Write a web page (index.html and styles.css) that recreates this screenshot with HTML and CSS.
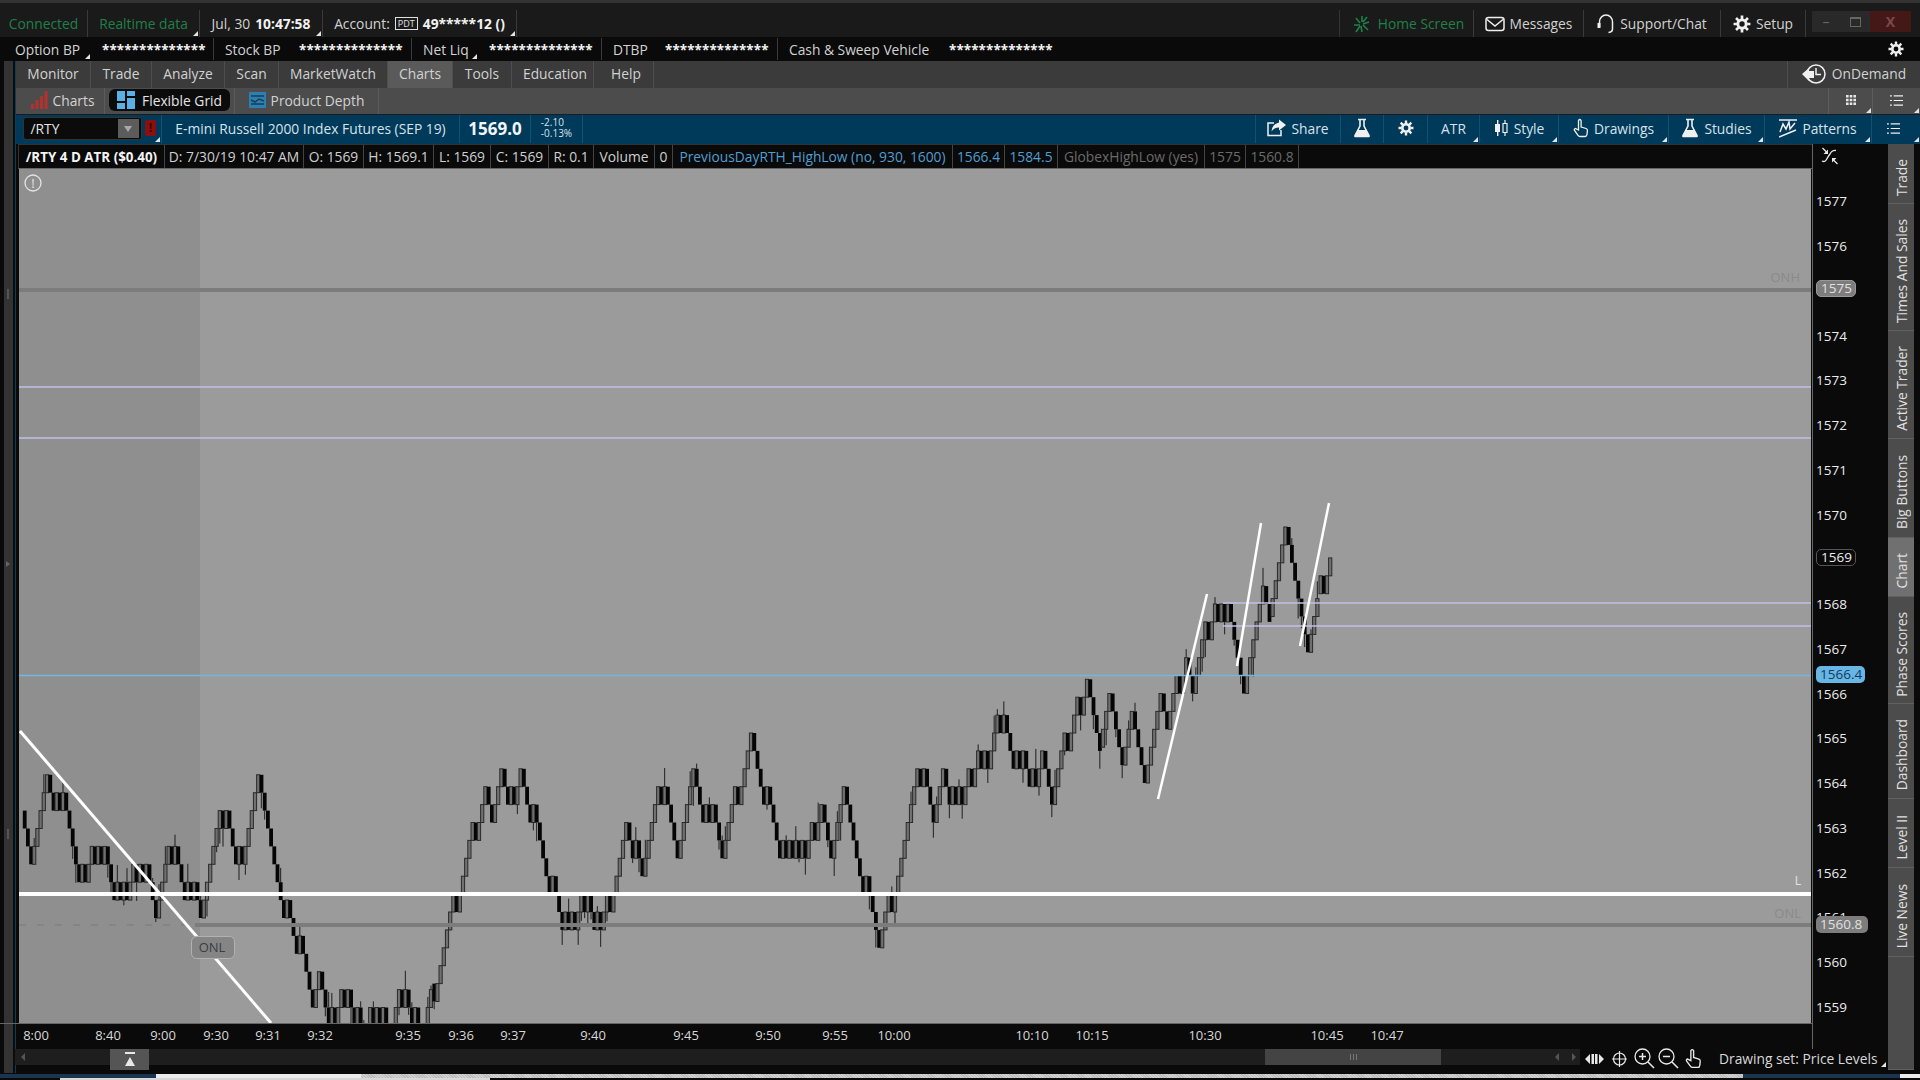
FILE: index.html
```html
<!DOCTYPE html>
<html>
  <head>
    <meta charset="UTF-8" />
    <title>Charts</title>
    <link rel="stylesheet" href="styles.css">
  </head>
  <body>
    <!-- shared icons -->
    <svg class="defs" width="0" height="0">
      <symbol id="gear" viewBox="0 0 16 16">
        <g fill="none" stroke="currentColor">
          <circle cx="8" cy="8" r="3.7" stroke-width="2.6" />
          <path stroke-width="2.4" d="M8 .5v3M8 12.5v3M.5 8h3M12.5 8h3M2.7 2.7l2.1 2.1M11.2 11.2l2.1 2.1M2.7 13.3l2.1-2.1M11.2 4.8l2.1-2.1" />
        </g>
      </symbol>
      <symbol id="flask" viewBox="0 0 18 20">
        <path fill="none" stroke="currentColor" stroke-width="1.6" d="M5 1.5h8M7 2v6L2 17.5q-.4 1 .7 1h12.6q1.100 0 .7-1L11 8V2" />
        <path fill="currentColor" d="M5 12h8l3.500 6.500h-15z" />
      </symbol>
      <symbol id="list" viewBox="0 0 14 14">
        <path fill="none" stroke="currentColor" stroke-width="1.300" d="M0 2h2M4 2h10M0 7h2M4 7h10M0 12h2M4 12h10" />
      </symbol>
      <symbol id="hand" viewBox="0 0 16 20">
        <path fill="none" stroke="currentColor" stroke-width="1.300" d="M5.500 12V2.500q1.300-2 2.600 0V9l5 1.500q1.400.5 1.300 2l-.4 4q-.3 2-2 2H7q-1.200 0-2-1.200L1.500 12.500q-.8-1.500.8-2z" />
      </symbol>
    </svg>

    <div class="app">
      <div class="topline"></div>

      <div class="statusbar">
        <div class="cell green">Connected</div>
        <div class="cell green tri">Realtime data</div>
        <div class="cell tri">Jul, 30 <b>10:47:58</b></div>
        <div class="cell tri">Account: <span class="pdt">PDT</span> <b>49*****12 ()</b></div>
        <div class="cell blank"></div>
        <div class="cell green home">
          <svg class="ico" width="17" height="18" viewBox="0 0 17 18">
            <path fill="none" stroke="currentColor" stroke-width="1.600" d="M9 1v6M3 3l4 5M1 10h6M3 17l4-6M9 17l-1-6M15 15l-5-5M16 7l-6 2M14 2l-4 5" />
          </svg>
          Home Screen
        </div>
        <div class="cell">
          <svg class="ico" width="20" height="16" viewBox="0 0 20 16">
            <rect x="1" y="1.500" width="18" height="13" rx="2.500" fill="none" stroke="currentColor" stroke-width="1.500" />
            <path d="M2 3.500l8 6.500 8-6.500" fill="none" stroke="currentColor" stroke-width="1.500" />
          </svg>
          Messages
        </div>
        <div class="cell">
          <svg class="ico" width="18" height="20" viewBox="0 0 18 20">
            <path fill="none" stroke="currentColor" stroke-width="1.500" d="M2.500 13V8a6.500 7 0 0 1 13 0v7q0 3-4 3.500" />
            <path fill="currentColor" d="M.5 9h3v5h-3z" />
          </svg>
          Support/Chat
        </div>
        <div class="cell">
          <svg class="ico" width="18" height="18"><use href="#gear" /></svg>
          Setup
        </div>
        <div class="winbtns">
          <span class="winbtn">&ndash;</span>
          <span class="winbtn"><i class="maxbox"></i></span>
          <span class="winbtn close">X</span>
        </div>
      </div>

      <div class="balances">
        <div class="cell label tri">Option BP</div>
        <div class="cell stars">**************</div>
        <div class="cell label">Stock BP</div>
        <div class="cell stars">**************</div>
        <div class="cell label tri">Net Liq</div>
        <div class="cell stars">**************</div>
        <div class="cell label">DTBP</div>
        <div class="cell stars">**************</div>
        <div class="cell label">Cash &amp; Sweep Vehicle</div>
        <div class="cell stars noline">**************</div>
        <div class="cell blank noline"></div>
        <div class="cell noline gearcell">
          <svg class="ico" width="16" height="16"><use href="#gear" /></svg>
        </div>
      </div>

      <div class="workspace">
        <div class="gutter">
          <i class="grip"></i>
          <i class="notch"></i>
          <i class="grip"></i>
        </div>

        <div class="main">
          <nav class="menu">
            <a class="cell">Monitor</a>
            <a class="cell">Trade</a>
            <a class="cell">Analyze</a>
            <a class="cell">Scan</a>
            <a class="cell">MarketWatch</a>
            <a class="cell active">Charts</a>
            <a class="cell">Tools</a>
            <a class="cell nudge">Education</a>
            <a class="cell nudge">Help</a>
            <div class="cell blank"></div>
            <a class="cell noline">
              <svg class="ico" width="25" height="22" viewBox="0 0 25 22">
                <circle cx="14" cy="11" r="9" fill="none" stroke="currentColor" stroke-width="1.500" />
                <path d="M14 5v6.500h5" fill="none" stroke="currentColor" stroke-width="1.500" />
                <path fill="currentColor" d="M0 11l7-6v3h5v7H7v3z" />
              </svg>
              OnDemand
            </a>
          </nav>

          <div class="subtabs">
            <div class="cell nudge">
              <svg class="ico" width="17" height="18" viewBox="0 0 17 18">
                <path fill="#b5322c" d="M0 13h3v5H0zM4.500 9h3v9h-3zM9 5h3v13H9zM13.500 0h3v18h-3z" />
              </svg>
              Charts
            </div>
            <div class="cell">
              <span class="pill">
                <svg class="ico" width="18" height="18" viewBox="0 0 18 18">
                  <path fill="#58b0e4" d="M0 0h8v10H0zM10 0h8v5h-8zM0 12h8v6H0zM10 7h8v11h-8z" />
                </svg>
                Flexible Grid
              </span>
            </div>
            <div class="cell">
              <svg class="ico" width="17" height="16" viewBox="0 0 17 16">
                <rect width="17" height="16" fill="#2e7fb0" />
                <path d="M2 4h13M2 8l4 2 4-3 5 2M2 12h13" fill="none" stroke="#12405c" stroke-width="1.500" />
              </svg>
              Product Depth
            </div>
            <div class="cell blank"></div>
            <div class="cell tri">
              <svg width="10" height="10" viewBox="0 0 10 10">
                <path fill="#e8e8e8" d="M0 0h2.600v2.600H0zM3.700 0h2.600v2.600H3.700zM7.400 0H10v2.600H7.400zM0 3.700h2.600v2.600H0zM3.700 3.700h2.600v2.600H3.700zM7.400 3.700H10v2.600H7.400zM0 7.400h2.600V10H0zM3.700 7.400h2.600V10H3.700zM7.400 7.400H10V10H7.400z" />
              </svg>
            </div>
            <div class="cell tri noline">
              <svg class="ico" width="13" height="13"><use href="#list" /></svg>
            </div>
          </div>

          <div class="symbolbar">
            <div class="cell noline">
              <div class="symbol">
                <span>/RTY</span>
                <i class="drop"></i>
              </div>
            </div>
            <div class="cell tri flagcell"><span class="alertflag">!</span></div>
            <div class="cell title">E-mini Russell 2000 Index Futures (SEP 19)</div>
            <div class="cell price">1569.0</div>
            <div class="cell change"><span>-2.10<br />-0.13%</span></div>
            <div class="cell blank"></div>
            <div class="cell">
              <svg class="ico" width="19" height="18" viewBox="0 0 19 18">
                <path fill="none" stroke="currentColor" stroke-width="1.500" d="M14 11v5.500H1V4h6" />
                <path fill="currentColor" d="M12 .5l7 5.500-7 5.500V8.500q-5 0-7.500 4Q5 5 12 3.500z" />
              </svg>
              Share
            </div>
            <div class="cell">
              <svg class="ico" width="18" height="20"><use href="#flask" /></svg>
            </div>
            <div class="cell">
              <svg class="ico" width="16" height="16"><use href="#gear" /></svg>
            </div>
            <div class="cell tri">ATR</div>
            <div class="cell tri">
              <svg class="ico" width="15" height="18" viewBox="0 0 15 18">
                <path fill="currentColor" d="M3 1h1.400v4H6v8H4.400v4H3v-4H1V5h2z" />
                <path fill="none" stroke="currentColor" stroke-width="1.200" d="M11 1v3.500M11 13.500V17M9 4.500h4v9H9z" />
              </svg>
              Style
            </div>
            <div class="cell tri">
              <svg class="ico" width="16" height="20"><use href="#hand" /></svg>
              Drawings
            </div>
            <div class="cell tri">
              <svg class="ico" width="18" height="20"><use href="#flask" /></svg>
              Studies
            </div>
            <div class="cell tri">
              <svg class="ico" width="18" height="19" viewBox="0 0 18 19">
                <path fill="none" stroke="currentColor" stroke-width="1.500" d="M0 1h18M1 13l3-8 3 5 3-7 1 7 5-6M0 18l17-7" />
              </svg>
              Patterns
            </div>
            <div class="cell tri noline listcell">
              <svg class="ico" width="13" height="13"><use href="#list" /></svg>
            </div>
          </div>

          <div class="body">
            <div class="infobar">
              <div class="info strong">/RTY 4 D ATR ($0.40)</div>
              <div class="info">D: 7/30/19 10:47 AM</div>
              <div class="info">O: 1569</div>
              <div class="info">H: 1569.1</div>
              <div class="info">L: 1569</div>
              <div class="info">C: 1569</div>
              <div class="info">R: 0.1</div>
              <div class="info">Volume</div>
              <div class="info">0</div>
              <div class="info blue">PreviousDayRTH_HighLow (no, 930, 1600)</div>
              <div class="info blue">1566.4</div>
              <div class="info blue">1584.5</div>
              <div class="info grey">GlobexHighLow (yes)</div>
              <div class="info grey">1575</div>
              <div class="info grey">1560.8</div>
            </div>

            <div class="chart">
              <svg class="plot" width="1792" height="854" viewBox="19 169 1792 854">
                <rect class="plot-bg" x="19" y="169" width="1792" height="854" />
                <rect class="plot-shade" x="19" y="169" width="181" height="854" />
                <g id="candles"></g>

                <line class="lvl-grey" x1="19" y1="290" x2="1811" y2="290" />
                <line class="lvl-grey" x1="195" y1="925" x2="1811" y2="925" />
                <line class="lvl-dash" x1="19" y1="925" x2="195" y2="925" />
                <line class="lvl-lav" x1="19" y1="387" x2="1811" y2="387" />
                <line class="lvl-lav" x1="19" y1="438" x2="1811" y2="438" />
                <line class="lvl-lav" x1="1223" y1="603" x2="1811" y2="603" />
                <line class="lvl-lav" x1="1223" y1="626" x2="1811" y2="626" />
                <line class="lvl-blue" x1="19" y1="675.500" x2="1811" y2="675.500" />
                <line class="lvl-white" x1="19" y1="894" x2="1811" y2="894" />

                <line class="trend" x1="20" y1="731" x2="271" y2="1023" />
                <line class="trend thin" x1="1158" y1="799" x2="1207" y2="594" />
                <line class="trend thin" x1="1237" y1="666" x2="1261" y2="523" />
                <line class="trend thin" x1="1300" y1="646" x2="1329" y2="503" />

                <text class="lvl-text" x="1800" y="282" text-anchor="end">ONH</text>
                <text class="lvl-text" x="1801" y="918" text-anchor="end">ONL</text>
                <text class="lvl-mark" x="1801" y="885" text-anchor="end">L</text>

                <rect class="bubble" x="191.500" y="936.500" width="43" height="22" rx="5" />
                <text class="bubble-text" x="212" y="952" text-anchor="middle">ONL</text>

                <circle class="note" cx="33" cy="183" r="8" />
                <text class="note-text" x="33" y="188" text-anchor="middle">!</text>
              </svg>
            </div>

            <div class="timeline">
              <span style="left: 36px">8:00</span>
              <span style="left: 108px">8:40</span>
              <span style="left: 163px">9:00</span>
              <span style="left: 216px">9:30</span>
              <span style="left: 268px">9:31</span>
              <span style="left: 320px">9:32</span>
              <span style="left: 408px">9:35</span>
              <span style="left: 461px">9:36</span>
              <span style="left: 513px">9:37</span>
              <span style="left: 593px">9:40</span>
              <span style="left: 686px">9:45</span>
              <span style="left: 768px">9:50</span>
              <span style="left: 835px">9:55</span>
              <span style="left: 894px">10:00</span>
              <span style="left: 1032px">10:10</span>
              <span style="left: 1092px">10:15</span>
              <span style="left: 1205px">10:30</span>
              <span style="left: 1327px">10:45</span>
              <span style="left: 1387px">10:47</span>
            </div>

            <div class="axis">
              <svg class="axis-ico" width="18" height="18" viewBox="0 0 18 18">
                <path fill="none" stroke="#e8e8e8" stroke-width="1.300" d="M1 14q3 1.500 4.500-1.500T9 7q2-4 6-3.500" />
                <path fill="none" stroke="#e8e8e8" stroke-width="1.300" d="M1.500 1l4 4M16.500 17l-4-4" />
                <path fill="#e8e8e8" d="M7 7H2.500L7 2.500zM11 11h4.500L11 15.500z" />
              </svg>
              <div class="prices">
                <span>1577</span><span>1576</span><span class="under">1575</span><span>1574</span>
                <span>1573</span><span>1572</span><span>1571</span><span>1570</span>
                <span class="under">1569</span><span>1568</span><span>1567</span><span>1566</span>
                <span>1565</span><span>1564</span><span>1563</span><span>1562</span>
                <span>1561</span><span>1560</span><span>1559</span>
              </div>
              <span class="badge b-grey b-1575">1575</span>
              <span class="badge b-last">1569</span>
              <span class="badge b-blue">1566.4</span>
              <span class="badge b-grey b-1560">1560.8</span>
            </div>

            <div class="sidetabs">
              <div class="tab"><span>Trade</span></div>
              <div class="tab"><span>Times And Sales</span></div>
              <div class="tab"><span>Active Trader</span></div>
              <div class="tab"><span>Big Buttons</span></div>
              <div class="tab active"><span>Chart</span></div>
              <div class="tab"><span>Phase Scores</span></div>
              <div class="tab"><span>Dashboard</span></div>
              <div class="tab"><span>Level II</span></div>
              <div class="tab"><span>Live News</span></div>
              <div class="tab"></div>
            </div>

            <div class="bottombar">
              <div class="scroller">
                <i class="arrow left first"></i>
                <div class="pin">
                  <svg width="12" height="15" viewBox="0 0 12 15">
                    <path fill="#e8e8e8" d="M1 0h10v2H1zM6 5l5 9H1z" />
                  </svg>
                </div>
                <div class="thumb"><i class="gripper"></i></div>
                <i class="arrow left"></i>
                <i class="arrow right"></i>
              </div>
              <div class="tools">
                <svg class="t-pan" width="19" height="14" viewBox="0 0 19 14">
                  <path fill="#e8e8e8" d="M0 7l5-5v10zM19 7l-5-5v10zM6.500 2h2.500v10H6.500zM10 2h2.500v10H10z" />
                </svg>
                <svg class="t-cross" width="15" height="16" viewBox="0 0 15 16">
                  <circle cx="7.500" cy="8" r="6" fill="none" stroke="#e8e8e8" stroke-width="1.200" />
                  <path d="M7.500 0v16M0 8h15" stroke="#e8e8e8" stroke-width="1.200" />
                </svg>
                <svg class="t-zoomin" width="21" height="21" viewBox="0 0 21 21">
                  <circle cx="8.500" cy="8.500" r="7.500" fill="none" stroke="#e8e8e8" stroke-width="1.300" />
                  <path d="M14 14l6 6M5 8.500h7M8.500 5v7" stroke="#e8e8e8" stroke-width="1.500" />
                </svg>
                <svg class="t-zoomout" width="21" height="21" viewBox="0 0 21 21">
                  <circle cx="8.500" cy="8.500" r="7.500" fill="none" stroke="#e8e8e8" stroke-width="1.300" />
                  <path d="M14 14l6 6M5 8.500h7" stroke="#e8e8e8" stroke-width="1.500" />
                </svg>
                <svg class="hand" width="17" height="21"><use href="#hand" /></svg>
                <span class="drawset tri">Drawing set: Price Levels</span>
              </div>
            </div>
          </div>
        </div>
      </div>

      <div class="taskbar">
        <div class="taskrow">
          <i class="seg-blue"></i>
          <i class="seg-white"></i>
          <i class="seg-hatch"></i>
          <i class="seg-blue"></i>
          <i class="seg-white"></i>
        </div>
        <i class="taskline"></i>
      </div>
    </div>

    <script src="chart.js"></script>
  </body>
</html>
```

FILE: styles.css
```css
* {
  box-sizing: border-box;
}

body {
  margin: 0;
  width: 1920px;
  height: 1080px;
  overflow: hidden;
  background-color: #0a0a0a;
  color: #d2d2d2;
  font-family: "Open Sans", "Liberation Sans", sans-serif;
  font-size: 13.8px;
}

.defs {
  position: absolute;
}

.app {
  display: flex;
  flex-direction: column;
  height: 1080px;
}

.topline {
  height: 3px;
  background-color: #333;
}

/* generic bar cell */
.cell {
  position: relative;
  display: flex;
  align-items: center;
  justify-content: center;
  gap: 5px;
  white-space: nowrap;
  min-width: 0;
  border-right: 1px solid #3a3a3a;
}

.noline {
  border-right: 0;
}

.nudge {
  padding-left: 5px;
}

.ico {
  flex: none;
  color: #f0f0f0;
}

/* little corner triangle on cells that have a menu */
.tri::after {
  content: "";
  position: absolute;
  right: 1px;
  bottom: 1px;
  border-style: solid;
  border-width: 0 0 5px 5px;
  border-color: transparent transparent #e4e4e4 transparent;
}

.statusbar {
  display: grid;
  grid-template-columns: 88px 112px 123px 194px 1fr 134px 110px 137px 85px 114px;
  height: 34px;
  background-color: #1a1a1a;
  flex: none;
}

.statusbar .cell {
  margin: 7px 0 0;
}

.statusbar .blank {
  border-right: 1px solid #333;
}

.statusbar .home {
  padding-left: 4px;
  gap: 8px;
}

.green,
.green .ico {
  color: #1f8048;
}

b {
  color: #f2f2f2;
}

.pdt {
  padding: 0 2px;
  border: 1px solid #e0e0e0;
  color: #e0e0e0;
  font-size: 9px;
  line-height: 11px;
}

.winbtns {
  display: grid;
  grid-template-columns: 28px 30px 41px;
  height: 21px;
  margin: 8px 0 0 6px;
  color: #666;
}

.winbtn {
  display: flex;
  align-items: center;
  justify-content: center;
  background-color: #292929;
  font-size: 14px;
}

.winbtn.close {
  background-color: #451818;
  color: #7a4a4a;
  font-weight: bold;
}

.maxbox {
  width: 11px;
  height: 10px;
  border: 1px solid #666;
  border-top-width: 2px;
}

.balances {
  display: grid;
  grid-template-columns: 102px 112px 85px 113px 77px 113px 63px 113px 171px 113px 1fr 48px;
  height: 24px;
  background-color: #0a0a0a;
  flex: none;
}

.balances .cell {
  justify-content: flex-start;
  margin: 1px 0;
}

.balances .label {
  border-right: 0;
  padding-left: 11px;
}

.balances .label:first-child {
  padding-left: 15px;
}

.balances .label:first-child::after {
  right: 12px;
}

.balances .label:nth-child(5)::after {
  right: 12px;
}

.balances .gearcell {
  justify-content: center;
}

.stars {
  color: #f2f2f2;
  font-weight: bold;
  font-size: 13.4px;
  letter-spacing: 0.1px;
  padding-top: 1px;
}

.workspace {
  display: flex;
  height: 1012px;
  flex: none;
}

.gutter {
  flex: none;
  display: flex;
  flex-direction: column;
  align-items: center;
  gap: 262px;
  width: 15px;
  padding: 228px 2px 0 4px;
  background: linear-gradient(to right, #333 9px, #0c0c0c 9px);
  background-position: 4px 0;
  background-repeat: no-repeat;
}

.grip {
  width: 2px;
  height: 10px;
  background-color: #555;
  margin-right: 2px;
}

.notch {
  width: 0;
  height: 0;
  margin-right: 2px;
  border-style: solid;
  border-width: 3px 0 3px 4px;
  border-color: transparent transparent transparent #666;
}

.main {
  flex: 1;
  display: flex;
  flex-direction: column;
  min-width: 0;
  border-left: 1px solid #0c3c58;
}

.menu {
  display: grid;
  grid-template-columns: 75px 61px 73px 54px 109px 65px 59px 82px 60px 1fr 132px;
  height: 27px;
  background-color: #3b3b3b;
  flex: none;
}

.menu .cell {
  border-right-color: #4e4e4e;
  padding-bottom: 2px;
}

.menu .active {
  background-color: #5a5a5a;
}

.subtabs {
  display: grid;
  grid-template-columns: 89px 130px 144px 1fr 44px 47px;
  height: 26px;
  background-color: #4c4c4c;
  flex: none;
}

.subtabs .cell {
  border-right-color: #5c5c5c;
  padding-bottom: 2px;
}

.pill {
  display: flex;
  align-items: center;
  gap: 7px;
  height: 22px;
  padding: 0 8px;
  border-radius: 6px;
  background-color: #0b0b0b;
  color: #e4e4e4;
}

.symbolbar {
  display: grid;
  grid-template-columns: 129px 17px 298px 71px 52px 1fr 85px 43px 44px 52px 79px 110px 96px 107px 48px;
  height: 30px;
  padding-bottom: 1px;
  background-color: #003a5b;
  border-top: 1px solid #1c1c1c;
  flex: none;
  color: #d8e2e8;
}

.symbolbar .cell {
  border-right-color: #14506f;
  padding-bottom: 2px;
}

.symbolbar .flagcell {
  padding-right: 5px;
}

.symbolbar .listcell {
  padding-right: 6px;
}

.symbol {
  display: flex;
  align-items: center;
  justify-content: space-between;
  width: 119px;
  height: 23px;
  margin-left: 3px;
  padding: 0 2px 0 7px;
  border: 1px solid #333;
  border-radius: 3px;
  background-color: #0b0b0b;
  color: #e4e4e4;
}

.drop {
  position: relative;
  width: 21px;
  height: 19px;
  background-color: #5c5c5c;
}

.drop::after {
  content: "";
  position: absolute;
  left: 6px;
  top: 7px;
  border-style: solid;
  border-width: 6px 4.500px 0 4.500px;
  border-color: #a8a8a8 transparent transparent transparent;
}

.alertflag {
  display: block;
  width: 12px;
  height: 16px;
  border-radius: 2px;
  background-color: #8c0f0f;
  color: #3d0606;
  font-size: 12px;
  font-weight: bold;
  line-height: 16px;
  text-align: center;
}

.price {
  color: #f4f4f4;
  font-size: 17px;
  font-weight: bold;
}

.change {
  font-size: 10px;
  line-height: 11px;
}

.body {
  flex: 1;
  display: grid;
  grid-template-columns: 1796px 76px 26px 6px;
  grid-template-rows: 25px 854px 26px 21px;
  background-color: #0a0a0a;
  min-height: 0;
}

.infobar {
  grid-column: 1;
  grid-row: 1;
  display: grid;
  grid-template-columns: 146px 139px 60px 70px 57px 58px 45px 61px 18px 280px 52px 53px 147px 41px 53px 1fr;
  margin-left: 2px;
  border-top: 1px solid #333;
  border-bottom: 1px solid #666;
  border-left: 1px solid #333;
}

.info {
  display: flex;
  align-items: center;
  justify-content: center;
  white-space: nowrap;
  color: #cfcfcf;
  border-right: 1px solid #444;
  min-width: 0;
}

.info.strong {
  color: #f4f4f4;
  font-weight: bold;
  font-size: 13.400px;
}

.info.blue {
  color: #4f9ed2;
}

.info.grey {
  color: #6a6a6a;
}

.chart {
  grid-column: 1;
  grid-row: 2;
  padding-left: 3px;
}

.plot {
  display: block;
}

.plot-bg {
  fill: #9b9b9b;
}

.plot-shade {
  fill: #8f8f8f;
}

.lvl-grey {
  stroke: #7c7c7c;
  stroke-width: 4;
}

.lvl-dash {
  stroke: #7a7a7a;
  stroke-width: 1;
  stroke-dasharray: 7 11;
}

.lvl-lav {
  stroke: #c2bfe8;
  stroke-width: 1.500;
}

.lvl-blue {
  stroke: #74b6de;
  stroke-width: 1.500;
}

.lvl-white {
  stroke: #fff;
  stroke-width: 4;
}

.trend {
  stroke: #fff;
  stroke-width: 3;
}

.trend.thin {
  stroke-width: 2.500;
}

.lvl-text {
  fill: #8a8a8a;
  font-size: 13px;
}

.lvl-mark {
  fill: #e4e4e4;
  font-size: 12px;
}

.bubble {
  fill: #858585;
  stroke: #b2b2b2;
}

.bubble-text {
  fill: #3c3c44;
  font-size: 13px;
}

.note {
  fill: none;
  stroke: #e4e4e4;
  stroke-width: 1.300;
}

.note-text {
  fill: #e4e4e4;
  font-size: 13px;
}

.timeline {
  grid-column: 1;
  grid-row: 3;
  position: relative;
  margin-left: -16px;
  border-top: 1px solid #666;
}

.timeline span {
  position: absolute;
  top: 2px;
  transform: translateX(-50%);
  color: #d8d8d8;
  font-size: 13px;
}

.axis {
  grid-column: 2;
  grid-row: 1 / 4;
  position: relative;
  border-left: 1px solid #666;
  color: #ececec;
  font-size: 13.5px;
}

.axis-ico {
  position: absolute;
  left: 8px;
  top: 3px;
}

.prices {
  display: flex;
  flex-direction: column;
  padding-top: 35px;
}

.prices span {
  display: flex;
  align-items: center;
  height: 44.760px;
  padding-left: 3px;
}

/* labels the level badges sit right on top of */
.prices .under {
  visibility: hidden;
}

.badge {
  position: absolute;
  left: 3px;
  height: 17px;
  padding: 0 4px;
  border-radius: 5px;
  line-height: 16px;
}

.b-grey {
  background-color: #7d7d7d;
  color: #e0e0e0;
}

.b-1575 {
  top: 136px;
  width: 40px;
  border: 1px solid #999;
  line-height: 14px;
}

.b-1560 {
  top: 772px;
  width: 52px;
}

.b-last {
  top: 405px;
  width: 40px;
  border: 1px solid #555;
  background-color: #0a0a0a;
  line-height: 14px;
}

.b-blue {
  top: 522px;
  width: 49px;
  background-color: #68b6e6;
  color: #0e3d5a;
}

.sidetabs {
  grid-column: 3;
  grid-row: 1 / 5;
  display: grid;
  grid-template-rows: 60px 127px 108px 99px 59px 107px 95px 69px 89px 1fr;
}

.tab {
  display: flex;
  align-items: center;
  justify-content: center;
  padding-top: 8px;
  background-color: #4c4c4c;
  border-bottom: 1px solid #606060;
  color: #e0e0e0;
  min-height: 0;
}

.tab.active {
  background-color: #707070;
}

.tab span {
  writing-mode: vertical-rl;
  transform: rotate(180deg);
  white-space: nowrap;
}

.bottombar {
  grid-column: 1 / 3;
  grid-row: 4;
  display: flex;
  margin-left: -1px;
}

.scroller {
  flex: none;
  display: flex;
  align-items: flex-start;
  width: 1565px;
  height: 16px;
  background-color: #1e1e1e;
}

.arrow {
  flex: none;
  width: 0;
  height: 0;
  margin-top: 4px;
  border-style: solid;
  border-width: 4px 0;
  border-color: transparent;
}

.arrow.left {
  border-right: 4px solid #555;
  margin-left: 114px;
}

.arrow.right {
  border-left: 4px solid #555;
  margin-left: 13px;
}

.arrow.first {
  margin-left: 6px;
}

.pin {
  flex: none;
  display: flex;
  align-items: center;
  justify-content: center;
  width: 39px;
  height: 21px;
  margin-left: 85px;
  background-color: #555;
}

.thumb {
  flex: none;
  display: flex;
  align-items: center;
  justify-content: center;
  width: 176px;
  height: 16px;
  margin-left: 1116px;
  background-color: #444;
}

.gripper {
  width: 7px;
  height: 6px;
  border-left: 1px solid #777;
  border-right: 1px solid #777;
  background: linear-gradient(#777, #777) center / 1px 100% no-repeat;
}

.tools {
  flex: 1;
  display: flex;
  align-items: center;
  height: 21px;
  padding-left: 5px;
  margin-top: -1px;
}

.tools svg {
  flex: none;
}

.t-cross {
  margin-left: 8px;
}

.t-zoomin {
  margin-left: 7px;
}

.t-zoomout {
  margin-left: 3px;
}

.hand {
  color: #e8e8e8;
  margin-left: 6px;
}

.drawset {
  position: relative;
  margin-left: 17px;
  width: 168px;
  height: 18px;
  line-height: 18px;
  white-space: nowrap;
  color: #d8d8d8;
}

.taskbar {
  height: 7px;
  background-color: #0a0a0a;
  padding-top: 1px;
  flex: none;
}

.taskrow {
  display: grid;
  grid-template-columns: 156px 205px 1382px 157px 20px;
  height: 4px;
}

.seg-blue {
  background-color: #1b3550;
}

.seg-white {
  background-color: #ececec;
}

.seg-hatch {
  background: repeating-linear-gradient(45deg, #d2d2d2 0, #d2d2d2 1px, #bcbcbc 1px, #bcbcbc 2px);
}

.taskline {
  display: block;
  width: 430px;
  height: 2px;
  margin-left: 60px;
  background-color: #d8d8d8;
}
```

FILE: chart.js
```js
// Range bars for the /RTY chart. Each bar is one 0.40 brick (17.9px high);
// the path below is the list of swing points read off the chart as [x, y].
var swings = [
  [23,817],[28,857],[45,775],[59,808],[65,792],[82,880],[97,845],[105,870],[108,850],
  [120,898],[132,877],[140,863],[160,913],[173,845],[187,883],[190,877],[203,922],
  [223,818],[237,867],[242,842],[248,868],[263,775],[315,1015],[322,980],[330,1020],
  [342,993],[348,987],[353,1022],[360,1015],[375,1007],[383,1022],[402,1010],[408,985],
  [418,1022],[428,1007],[433,985],[438,993],[447,927],[467,877],[488,787],[497,823],
  [505,770],[522,775],[550,883],[560,917],[570,937],[583,910],[592,897],[600,937],
  [607,920],[615,892],[625,827],[632,828],[643,877],[660,792],[680,858],[698,762],
  [725,863],[755,733],[783,863],[790,833],[795,863],[803,842],[808,853],[823,810],
  [833,850],[848,783],[878,913],[890,917],[898,887],[922,770],[935,823],[943,775],
  [955,813],[958,787],[963,813],[982,742],[992,760],[1003,720],[1012,755],[1020,747],
  [1035,795],[1043,755],[1050,800],[1060,738],[1063,752],[1077,698],[1085,720],
  [1092,688],[1102,740],[1107,707],[1113,700],[1128,765],[1137,720],[1147,783],
  [1158,693],[1168,733],[1178,670],[1193,687],[1205,615],[1212,645],[1220,607],
  [1225,623],[1233,603],[1243,657],[1252,662],[1262,595],[1270,620],[1273,595],
  [1278,598],[1287,527],[1303,615],[1312,645],[1320,587],[1332,558]
];

var BRICK = 17.9;
var STEP = 3.2;
var BASE = 733;
var seed = 7;

function rnd() {
  seed = (seed * 16807) % 2147483647;
  return seed / 2147483647;
}

// the brick grid slips a few pixels along the session
function drift(x) {
  if (x < 430) return 6;
  if (x < 1100) return 0;
  if (x < 1270) return -3.7;
  if (x < 1318) return -9.1;
  return -14;
}

function levelOf(point) {
  return Math.round((point[1] - drift(point[0]) - BASE) / BRICK);
}

// turn the swings into a list of +1 / -1 moves, one per bar slot
function buildMoves() {
  var moves = [];
  var level = levelOf(swings[0]);
  for (var i = 1; i < swings.length; i++) {
    var target = levelOf(swings[i]);
    var net = target - level;
    var dir = net > 0 ? 1 : -1;
    var slots = Math.round((swings[i][0] - 23) / STEP) - moves.length;
    var pairs = Math.max(0, Math.floor((slots - Math.abs(net)) / 2));
    var seq = [];
    for (var n = 0; n < Math.abs(net); n++) seq.push(dir);
    while (pairs > 0) {
      var at = seq.length > 1 ? 1 + Math.floor(rnd() * (seq.length - 1)) : seq.length;
      if (pairs >= 2 && rnd() < 0.6) {
        seq.splice(at, 0, -dir, -dir, dir, dir);
        pairs -= 2;
      } else {
        seq.splice(at, 0, -dir, dir);
        pairs -= 1;
      }
    }
    moves = moves.concat(seq);
    level = target;
  }
  return moves;
}

function drawCandles() {
  var moves = buildMoves();
  var level = levelOf(swings[0]);
  var out = "";
  for (var i = 0; i < moves.length; i++) {
    var next = level + moves[i];
    var x = 23 + i * STEP;
    var top = BASE + drift(x) + Math.min(level, next) * BRICK;
    var up = moves[i] < 0; // screen y grows downward

    if (rnd() < 0.34) {
      var len = 4 + rnd() * 16;
      var above = up ? rnd() < 0.7 : rnd() < 0.3;
      var y1 = above ? top - len : top + BRICK;
      out += '<rect x="' + (x + 1) + '" y="' + y1 + '" width="1.200" height="' + len + '" fill="#333"/>';
    }

    if (up) {
      out += '<rect x="' + x + '" y="' + top + '" width="3.200" height="' + BRICK + '" fill="#707070" stroke="#2a2a2a" stroke-width="1"/>';
    } else {
      out += '<rect x="' + (x - 0.2) + '" y="' + top + '" width="3.800" height="' + BRICK + '" fill="#050505"/>';
    }
    level = next;
  }
  document.getElementById("candles").innerHTML = out;
}

drawCandles();
```
